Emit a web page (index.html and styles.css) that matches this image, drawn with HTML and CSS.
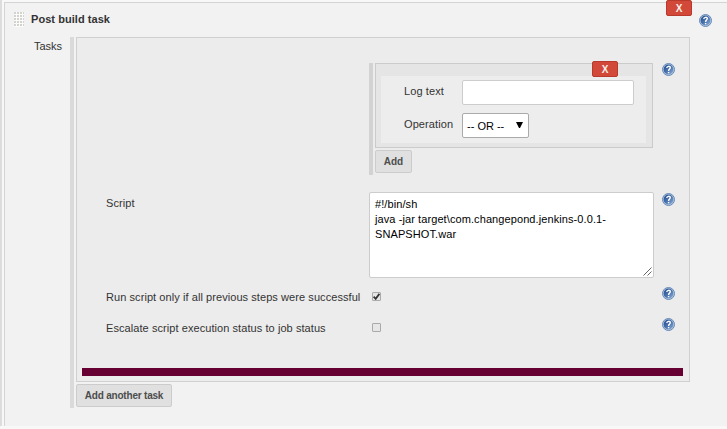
FILE: index.html
```
<!DOCTYPE html>
<html lang="en">
<head>
<meta charset="utf-8">
<title>Post build task</title>
<link rel="stylesheet" href="styles.css">
</head>
<body>
<svg width="0" height="0" class="defs" aria-hidden="true">
  <defs>
    <pattern id="dots" width="3" height="3" patternUnits="userSpaceOnUse"><rect width="3" height="3" fill="#fbfbfa"/><rect width="2" height="2" fill="#d2d2cf"/></pattern>
    <linearGradient id="blue" x1="0" y1="0" x2="1" y2="1"><stop offset="0" stop-color="#20498c"/><stop offset=".5" stop-color="#4a73ae"/><stop offset="1" stop-color="#8fb0d7"/></linearGradient>
    <symbol id="help" viewBox="0 0 13 13">
      <circle cx="6.5" cy="6.5" r="6" fill="#b9cce2" stroke="#6688b8"/>
      <circle cx="6.5" cy="6.5" r="4.9" fill="url(#blue)"/>
      <path d="M4.8 5C4.8 2.8 8.4 2.8 8.3 4.8C8.2 6.1 6.6 6.2 6.6 7.9M6.6 8.9v1.3" fill="none" stroke="#fff" stroke-width="1.4"/>
    </symbol>
  </defs>
</svg>
<main class="page">
  <div class="edge"></div>
  <section class="panel">
    <header class="heading">
      <svg class="grip" width="10" height="15"><rect width="10" height="15" fill="url(#dots)"/></svg>
      <h1>Post build task</h1>
      <button class="delete delete-outer">X</button>
      <svg class="help"><use href="#help"/></svg>
    </header>
    <div class="tasks">
      <div class="tasks-label">Tasks</div>
      <div class="repeat">
        <div class="task">
          <div class="row row-logs">
            <div class="field logs">
              <div class="log-box">
                <button class="delete delete-inner">X</button>
                <div class="log-form">
                  <label for="log">Log text</label><input id="log" class="text" type="text">
                  <label for="op">Operation</label>
                  <div id="op" class="select"><span>-- OR --</span><svg width="7" height="6"><path d="M0 0h7L4 6H3z"/></svg></div>
                </div>
              </div>
              <button class="button add">Add</button>
            </div>
            <svg class="help"><use href="#help"/></svg>
          </div>
          <div class="row row-script">
            <label class="name">Script</label>
            <div class="field script">#!/bin/sh<br>java -jar target\com.changepond.jenkins-0.0.1-<br>SNAPSHOT.war<svg class="resize" width="9" height="9"><path d="M.5 8.5l8-8M4.5 8.5l4-4" stroke="#555" stroke-width=".9"/></svg></div>
            <svg class="help"><use href="#help"/></svg>
          </div>
          <div class="row row-check">
            <label class="name">Run script only if all previous steps were successful</label>
            <div class="field"><span class="check"><svg width="7" height="7"><path d="M.6 3.6L2.7 5.8L6.4.8" fill="none" stroke="#333" stroke-width="1.8"/></svg></span></div>
            <svg class="help"><use href="#help"/></svg>
          </div>
          <div class="row row-check">
            <label class="name">Escalate script execution status to job status</label>
            <div class="field"><span class="check"></span></div>
            <svg class="help"><use href="#help"/></svg>
          </div>
          <div class="divider"></div>
        </div>
        <button class="button another">Add another task</button>
      </div>
    </div>
  </section>
</main>
</body>
</html>
```
FILE: styles.css
```
* { box-sizing: border-box; }
body { margin: 0; background: #f8f8f8; font: 11px/15px "Liberation Sans", Arial, sans-serif; color: #333; overflow: hidden; }
.defs { position: absolute; }
.page { display: flex; height: 426px; }
.edge { width: 2px; background: #ddd; }
.panel { flex: 1; margin: 2px 0 0 2px; border: solid #d4d4d4; border-width: 1px 0 0 1px; background: #f2f2f2; }
.heading { position: relative; display: flex; height: 34px; padding: 9px 0 0 9px; }
.grip { display: block; }
h1 { margin: 0 0 0 7px; font-size: 11px; line-height: 15px; letter-spacing: .05px; }
.heading .help { margin: 2px 15px 0 auto; }
.help { display: block; width: 13px; height: 13px; flex: none; }
.delete { position: absolute; width: 26px; height: 16px; padding: 1px 0 0; border: 1px solid #b93a2d; border-radius: 2px; background: #d24939; color: #f4f0ea; font: bold 10px/13px "Liberation Sans", Arial, sans-serif; }
.delete-outer { top: -3px; right: 35px; }
.delete-inner { top: -3px; right: 34px; }
.tasks { display: flex; }
.tasks-label { width: 65px; padding: 2px 0 0 29px; }
.repeat { width: 620px; height: 371px; padding-left: 2px; border-left: 4px solid #dadada; }
.task { height: 345px; padding-top: 25px; border: 1px solid #d0d0d0; background: #ececec; }
.row { display: flex; padding-left: 29px; }
.name { width: 263px; letter-spacing: .07px; white-space: nowrap; }
.field { width: 285px; margin-right: 8px; flex: none; }
.row-logs { height: 129px; padding-left: 292px; }
.logs { height: 112px; padding-left: 2px; border-left: 4px solid #d2d2d2; }
.log-box { position: relative; width: 278px; height: 85px; padding: 12px 6px 5px 5px; border: 1px solid #cbcbcb; background: #e5e5e5; }
.log-form { display: grid; grid-template-columns: 58px auto; row-gap: 8px; height: 67px; padding: 4px 12px 4px 23px; background: #ededed; align-content: start; }
.log-form label { padding-top: 4px; white-space: nowrap; letter-spacing: .1px; }
.text { width: 172px; height: 25px; border: 1px solid #ccc; border-radius: 2px; background: #fff; }
.select { display: flex; justify-content: space-between; width: 67px; height: 25px; padding: 5px 5px 0 4px; border: 1px solid #aaa; border-radius: 2px; background: #fff; color: #000; }
.select svg { margin-top: 3px; }
.row-logs .help { margin: 0; }
.button { display: block; height: 23px; margin-top: 2px; padding: 0; border: 1px solid #ccc; border-radius: 2px; background: #e0e0e0; color: #4d4d4d; font: bold 10px/21px "Liberation Sans", Arial, sans-serif; }
.add { width: 37px; }
.another { width: 96px; letter-spacing: -.2px; }
.row-script { height: 95px; }
.row-script .name { padding-top: 4px; }
.row-script .help { margin-top: 1px; }
.script { position: relative; height: 86px; padding: 4px 5px; border: 1px solid #ccc; border-radius: 2px; background: #fff; color: #000; letter-spacing: .09px; white-space: nowrap; }
.resize { position: absolute; right: 1px; bottom: 1px; }
.row-check { height: 31px; }
.row-check .name { padding-top: 3px; }
.row-check .field { padding: 5px 0 0 3px; }
.check { display: flex; align-items: center; justify-content: center; width: 9px; height: 9px; border: 1px solid #aaa; border-radius: 1px; background: #e6e6e6; }
.divider { width: 601px; height: 8px; margin: 19px 0 0 5px; background: #660033; }
```
